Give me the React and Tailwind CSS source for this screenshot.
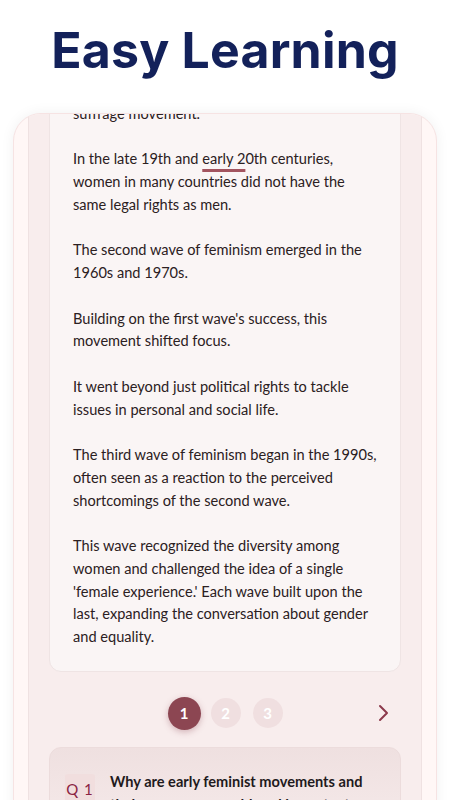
export default function App() {
  const paragraphs = [
    "The second wave of feminism emerged in the\n1960s and 1970s.",
    "Building on the first wave's success, this\nmovement shifted focus.",
    "It went beyond just political rights to tackle\nissues in personal and social life.",
    "The third wave of feminism began in the 1990s,\noften seen as a reaction to the perceived\nshortcomings of the second wave.",
    "This wave recognized the diversity among\nwomen and challenged the idea of a single\n'female experience.' Each wave built upon the\nlast, expanding the conversation about gender\nand equality.",
  ];

  return (
    <div className="h-[800px] w-[450px] overflow-hidden bg-white">
      <h1 className="flex h-[113px] items-start justify-center pt-[20px] font-['Inter',sans-serif] text-[50px] font-bold leading-[60px] tracking-[0.2px] text-[#13215a]">
        Easy Learning
      </h1>

      <div className="mx-[13px] h-[700px] overflow-hidden rounded-t-[28px] border border-[#f6e3e3] bg-[#fff7f6] shadow-[0_0_14px_rgba(0,0,0,0.06)]">
        <div className="mx-[14px] flex h-full flex-col border-x border-[#efe2e2] bg-[#f8eded] px-[20px]">
          <div className="-mt-[41px] rounded-b-[12px] border border-[#efe4e4] bg-[#faf5f5] pl-[23px] pr-[10px] pb-[22px] pt-[6px] font-['Lato','Noto_Sans',sans-serif] text-[14.6px] leading-[22.75px] text-[#2b2022]">
            <p className="mb-[22.75px] whitespace-pre-line">
              {"The first wave of feminism centered on the\nsuffrage movement."}
            </p>
            <p className="mb-[22.75px]">
              In the late 19th and{" "}
              <span className="underline decoration-[#a3545f] decoration-[3px] underline-offset-[5px]">early 2</span>
              0th centuries,
              <br />
              women in many countries did not have the
              <br />
              same legal rights as men.
            </p>
            {paragraphs.map((p, i) => (
              <p key={i} className="mb-[22.75px] whitespace-pre-line last:mb-0">
                {p}
              </p>
            ))}
          </div>

          <div className="relative mt-[25px] flex h-[33px] shrink-0 items-center justify-center gap-[10px] font-['Lato',sans-serif] text-[15px] font-bold text-white">
            <div className="flex h-[33px] w-[33px] items-center justify-center rounded-full bg-[#8c4652] shadow-[0_2px_6px_rgba(140,70,82,0.35)]">1</div>
            <div className="flex h-[30px] w-[30px] items-center justify-center rounded-full bg-[#f0dfe0]">2</div>
            <div className="ml-[2px] flex h-[30px] w-[30px] items-center justify-center rounded-full bg-[#f0dfe0]">3</div>
            <svg className="absolute right-[12px] top-[7px]" width="12" height="18" viewBox="0 0 12 18" fill="none">
              <path d="M3 2l7 7-7 7" stroke="#8c3a4c" strokeWidth="2" strokeLinecap="round" strokeLinejoin="round" />
            </svg>
          </div>

          <div className="mt-[17px] shrink-0 rounded-[12px] border border-[#ecdcdc] bg-gradient-to-b from-[#efe0e0] to-[#f6ebeb] px-[15px] pt-[22px]">
            <div className="flex items-start gap-[15px]">
              <div className="mt-[4px] flex h-[30px] w-[30px] shrink-0 items-center justify-center rounded-[3px] bg-[#f1dede] font-['Lato',sans-serif] text-[15px] tracking-[1px] text-[#8a2443]">
                Q 1
              </div>
              <p className="font-['Lato',sans-serif] text-[14.6px] font-bold leading-[23px] text-[#1f1a1c]">
                Why are early feminist movements and their successes considered important today?
              </p>
            </div>
          </div>
        </div>
      </div>
    </div>
  );
}
